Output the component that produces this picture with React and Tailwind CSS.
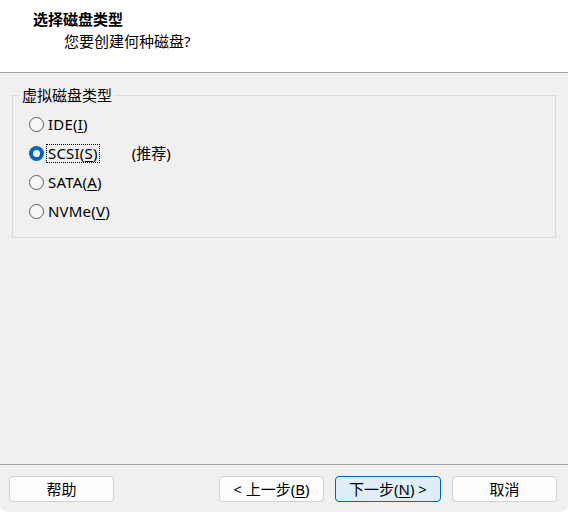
import { useState } from "react";

const font = { fontFamily: '"Noto Sans", "Noto Sans CJK SC", sans-serif' };

function Radio({ checked, label, mnemonic, extra, focused, onClick }) {
  return (
    <div className="flex items-center h-[29px] cursor-default" onClick={onClick}>
      {checked ? (
        <span className="w-[15px] h-[15px] rounded-full bg-[#0067c0] flex items-center justify-center">
          <span className="w-[7px] h-[7px] rounded-full bg-white" />
        </span>
      ) : (
        <span className="w-[15px] h-[15px] rounded-full border border-[#5c5c5c] bg-[#f6f6f6]" />
      )}
      <span
        className={`ml-[3px] px-[1px] leading-[17px] tracking-[0.2px] ${
          focused ? "outline outline-1 outline-dotted outline-black" : ""
        }`}
      >
        {label}(<span className="underline underline-offset-2">{mnemonic}</span>)
      </span>
      {extra && <span className="ml-[33px]">{extra}</span>}
    </div>
  );
}

function Button({ children, primary }) {
  return (
    <button
      className={`h-[26px] rounded-[4px] border text-[15px] leading-none text-black ${
        primary ? "bg-[#e0eef9] border-[#0067c0]" : "bg-[#fdfdfd] border-[#d0d0d0]"
      }`}
    >
      {children}
    </button>
  );
}

export default function App() {
  const [type, setType] = useState("SCSI");

  const options = [
    { key: "IDE", label: "IDE", m: "I" },
    { key: "SCSI", label: "SCSI", m: "S", extra: "(推荐)" },
    { key: "SATA", label: "SATA", m: "A" },
    { key: "NVMe", label: "NVMe", m: "V" },
  ];

  return (
    <div className="w-[568px] h-[512px] bg-white text-black text-[15px]" style={font}>
      <div className="h-full flex flex-col bg-[#f0f0f0] rounded-b-[8px] overflow-hidden">
        {/* header */}
        <div className="h-[73px] bg-white border-b border-[#a0a0a0] pt-[9px]">
          <div className="pl-[33px] font-bold leading-[20px]">选择磁盘类型</div>
          <div className="pl-[64px] mt-[2px] leading-[20px]">您要创建何种磁盘?</div>
        </div>

        {/* body */}
        <div className="flex-1 px-[12px] pt-[12px]">
          <fieldset className="border border-[#dcdcdc] h-[153px]">
            <legend className="ml-[7px] px-[2px] leading-[20px]">虚拟磁盘类型</legend>
            <div className="pl-[16px] pt-[5px]">
              {options.map((o) => (
                <Radio
                  key={o.key}
                  checked={type === o.key}
                  focused={type === o.key}
                  label={o.label}
                  mnemonic={o.m}
                  extra={o.extra}
                  onClick={() => setType(o.key)}
                />
              ))}
            </div>
          </fieldset>
        </div>

        {/* footer */}
        <div className="h-[48px] border-t border-[#a0a0a0] pt-[11px] pl-[9px] pr-[11px] flex">
          <div className="w-[105px] flex flex-col"><Button>帮助</Button></div>
          <div className="ml-auto flex gap-[11px]">
            <div className="w-[105px] flex flex-col">
              <Button>&lt; 上一步(<span className="underline underline-offset-2">B</span>)</Button>
            </div>
            <div className="w-[106px] flex flex-col">
              <Button primary>下一步(<span className="underline underline-offset-2">N</span>) &gt;</Button>
            </div>
            <div className="w-[105px] flex flex-col">
              <Button>取消</Button>
            </div>
          </div>
        </div>
      </div>
    </div>
  );
}
